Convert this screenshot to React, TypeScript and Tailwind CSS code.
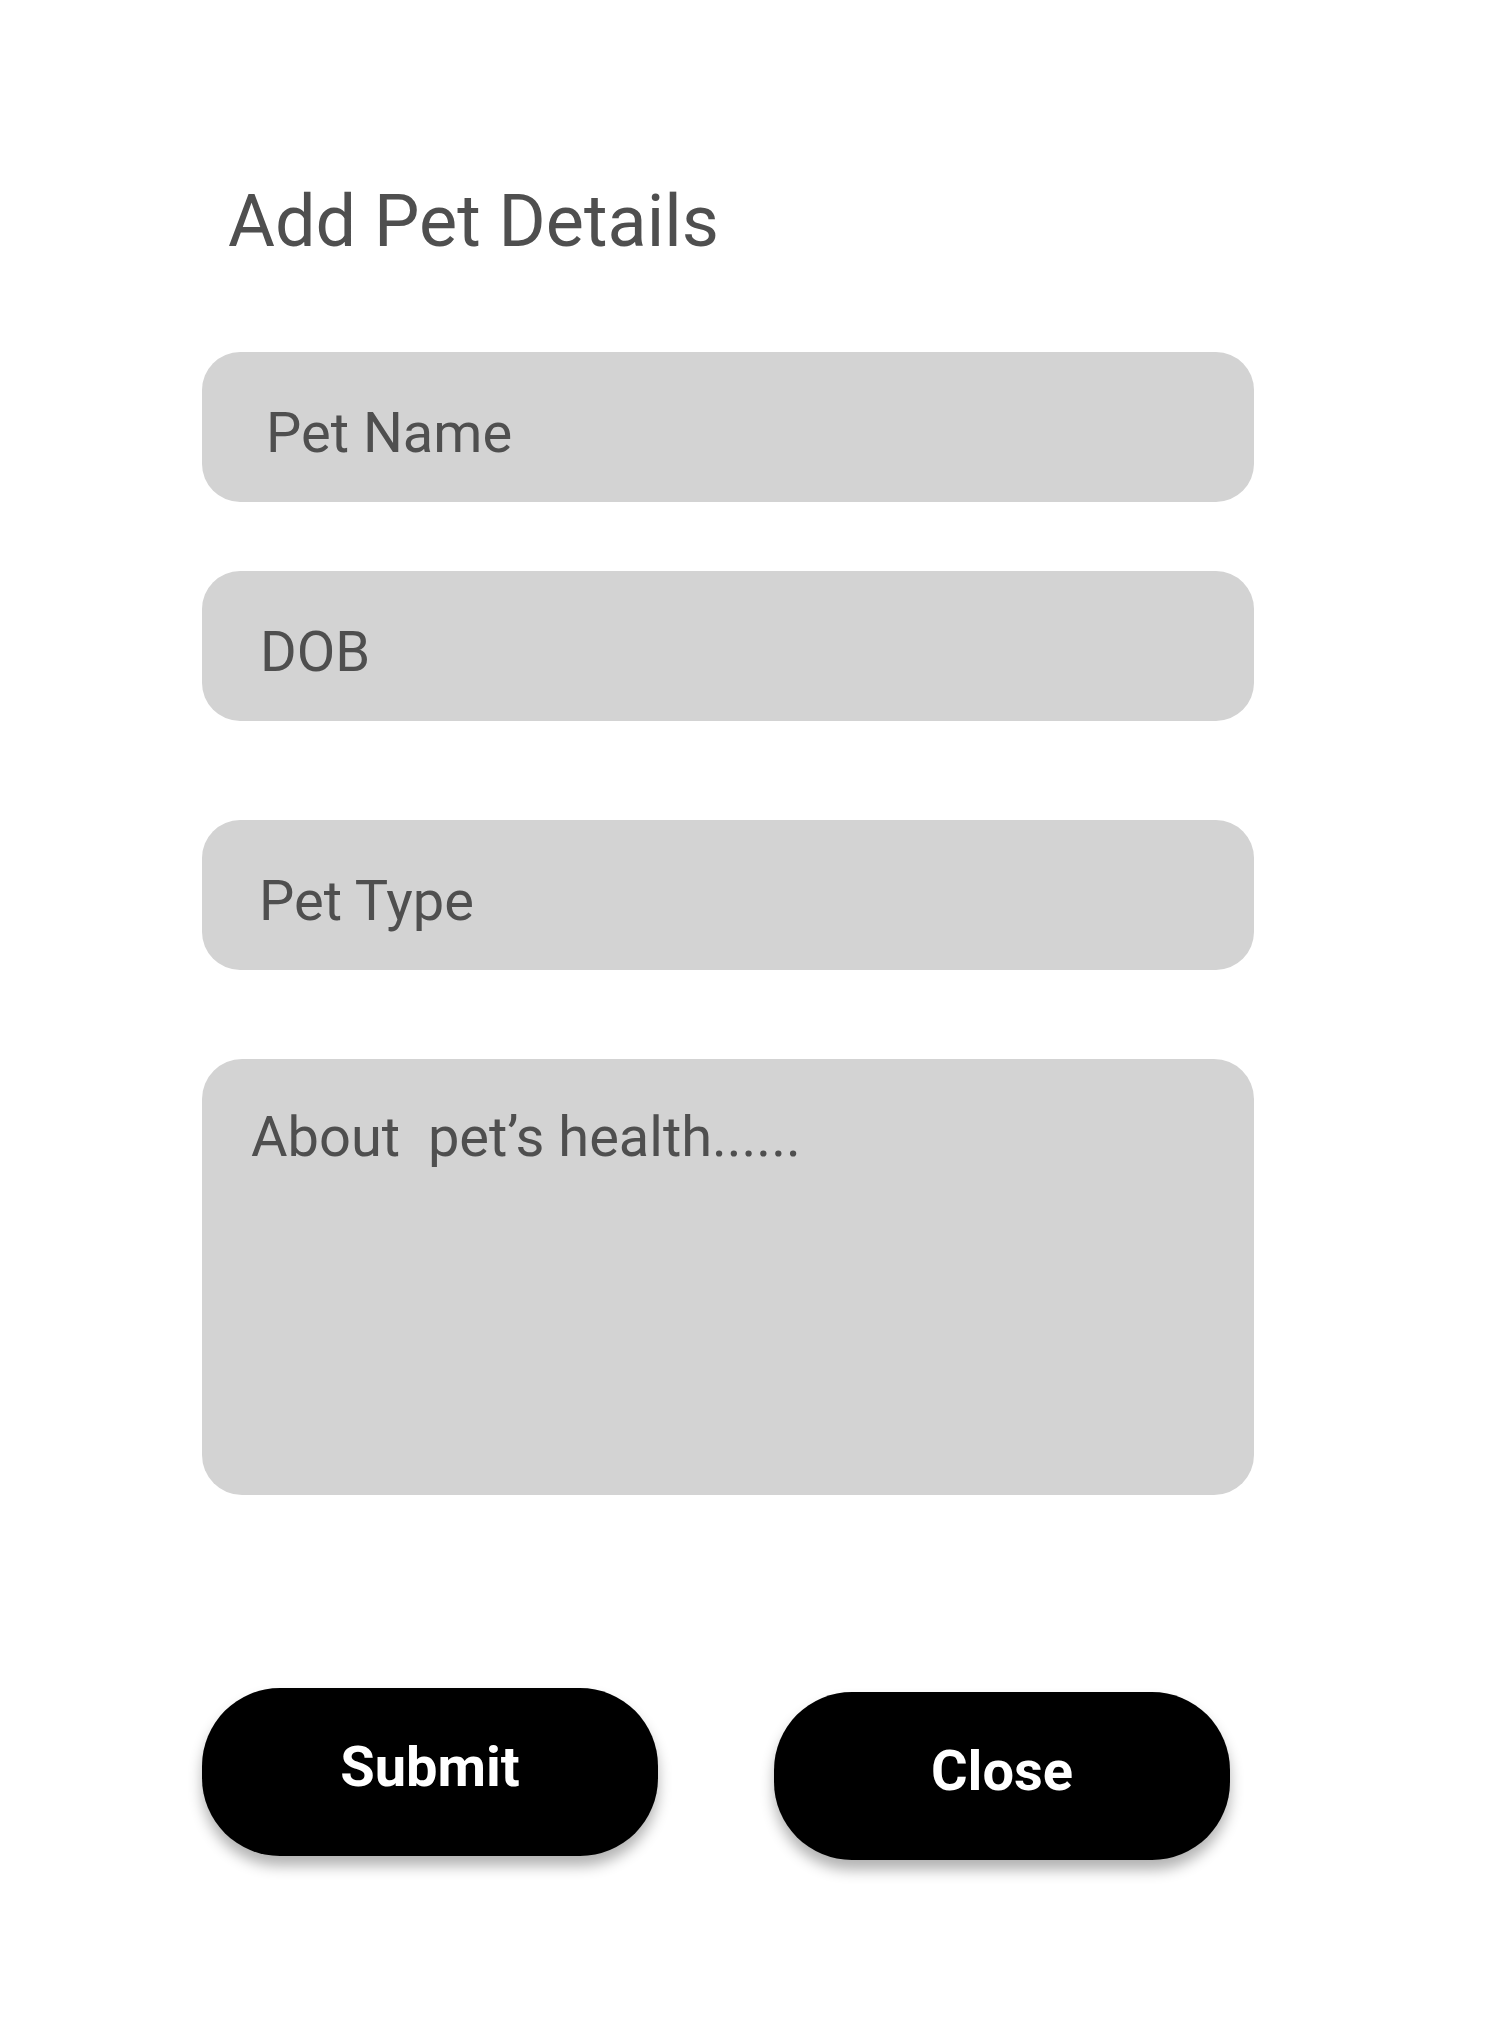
export default function App() {
  const fields = [
    { label: "Pet Name", pad: "pl-[64px]", mt: "mt-[93px]" },
    { label: "DOB", pad: "pl-[58px]", mt: "mt-[69px]" },
    { label: "Pet Type", pad: "pl-[57px]", mt: "mt-[99px]" },
  ];

  return (
    <div className="min-h-[2032px] w-[1500px] bg-white font-['Roboto',sans-serif]">
      <div className="pl-[202px] pt-[184px]">
        {/* Title */}
        <h1 className="pl-[26px] text-[72px] leading-[75px] font-normal text-[#4f4f4f]">Add Pet Details</h1>

        {/* Inputs */}
        <div className="w-[1052px]">
          {fields.map((f) => (
            <div
              key={f.label}
              className={`${f.mt} flex h-[150px] items-center rounded-[38px] bg-[#d3d3d3] ${f.pad} pt-[12px] text-[56px] leading-[56px] text-[#4f4f4f]`}
            >
              {f.label}
            </div>
          ))}

          <div className="mt-[89px] h-[436px] rounded-[40px] bg-[#d3d3d3] pl-[49px] pt-[50px] text-[56px] leading-[56px] whitespace-pre text-[#4f4f4f]">
            {"About  pet\u2019s health......"}
          </div>
        </div>

        {/* Actions */}
        <div className="mt-[193px] flex items-start gap-[116px]">
          <button className="flex h-[168px] w-[456px] items-center justify-center rounded-[78px] bg-black pb-[10px] text-[56px] font-bold text-white shadow-[0_10px_14px_rgba(0,0,0,0.3)]">
            Submit
          </button>
          <button className="mt-[4px] flex h-[168px] w-[456px] items-center justify-center rounded-[78px] bg-black pb-[10px] text-[56px] font-bold text-white shadow-[0_10px_14px_rgba(0,0,0,0.3)]">
            Close
          </button>
        </div>
      </div>
    </div>
  );
}
